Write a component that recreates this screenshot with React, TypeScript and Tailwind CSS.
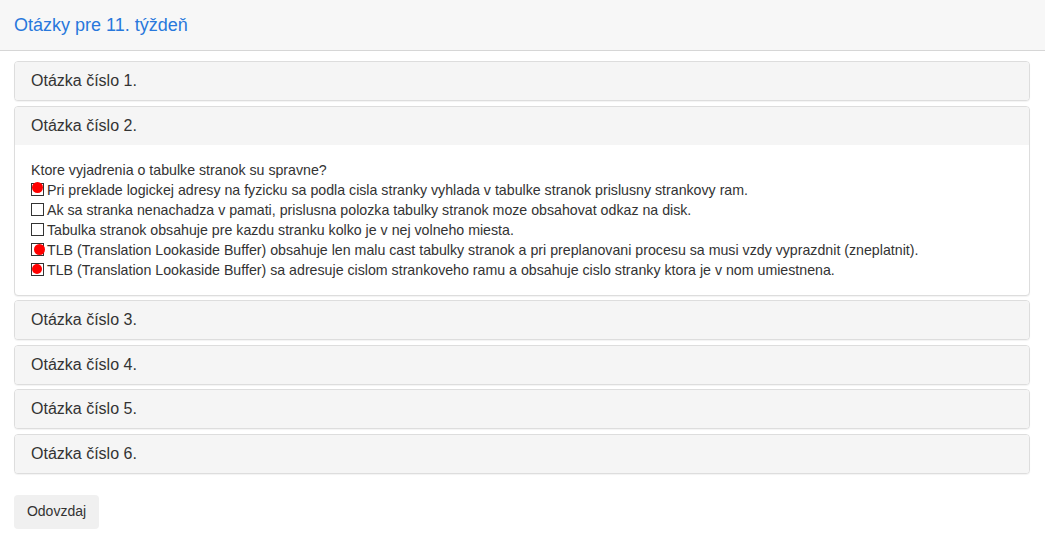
const questions = [1, 2, 3, 4, 5, 6];

const options = [
  { text: 'Pri preklade logickej adresy na fyzicku sa podla cisla stranky vyhlada v tabulke stranok prislusny strankovy ram.', dot: 'left-[0px] top-[-2px] w-[11px] h-[11px]' },
  { text: 'Ak sa stranka nenachadza v pamati, prislusna polozka tabulky stranok moze obsahovat odkaz na disk.', dot: '' },
  { text: 'Tabulka stranok obsahuje pre kazdu stranku kolko je v nej volneho miesta.', dot: '' },
  { text: 'TLB (Translation Lookaside Buffer) obsahuje len malu cast tabulky stranok a pri preplanovani procesu sa musi vzdy vyprazdnit (zneplatnit).', dot: 'left-[2px] top-[0px] w-[11px] h-[11px]' },
  { text: 'TLB (Translation Lookaside Buffer) sa adresuje cislom strankoveho ramu a obsahuje cislo stranky ktora je v nom umiestnena.', dot: 'left-[0px] top-[0px] w-[10px] h-[10px]' },
];

function Box({ dot }: { dot: string }) {
  return (
    <span className="relative inline-block w-[13px] h-[13px] border border-[#333] bg-white mr-[3px] shrink-0">
      {dot && <span className={`absolute rounded-full bg-[#ff0000] blur-[0.4px] ${dot}`} />}
    </span>
  );
}

export default function App() {
  return (
    <div className="min-h-[556px] bg-white text-[#333]" style={{ fontFamily: '"Liberation Sans", Arial, sans-serif' }}>
      <div className="h-[51px] bg-[#f7f7f7] border-b border-[#d6d6d6] px-[14px] flex items-center">
        <h1 className="text-[18px] text-[#2878dc] leading-none">Otázky pre 11. týždeň</h1>
      </div>

      <div className="pl-[14px] pr-[15px] pt-[10px]">
        {questions.map((n) => (
          <div key={n} className="mb-[4.6px] border border-[#dddddd] rounded-[4px] bg-white shadow-[0_1px_1px_rgba(0,0,0,0.05)] overflow-hidden">
            <div className="h-[38px] bg-[#f5f5f5] px-[16px] flex items-center text-[16px] text-[#333]">
              Otázka číslo {n}.
            </div>
            {n === 2 && (
              <div className="px-[16px] pt-[15px] pb-[15px] text-[14.2px] leading-[20px]">
                <div>Ktore vyjadrenia o tabulke stranok su spravne?</div>
                {options.map((o) => (
                  <div key={o.text} className="flex items-center">
                    <Box dot={o.dot} />
                    <span>{o.text}</span>
                  </div>
                ))}
              </div>
            )}
          </div>
        ))}

        <button className="mt-[16px] h-[34px] w-[85px] rounded-[4px] bg-[#f0f0f0] text-[14px] text-[#333]">
          Odovzdaj
        </button>
      </div>
    </div>
  );
}
